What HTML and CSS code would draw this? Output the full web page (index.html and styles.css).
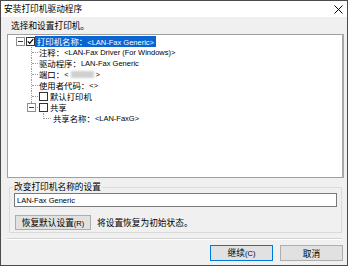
FILE: index.html
```html
<!DOCTYPE html>
<html lang="zh-CN">
<head>
  <meta charset="UTF-8" />
  <title>安装打印机驱动程序</title>
  <link rel="stylesheet" href="styles.css">
</head>
<body>
  <div class="window">
    <div class="titlebar">
      <span class="title">安装打印机驱动程序</span>
      <svg class="close" width="9" height="9" viewBox="0 0 9 9">
        <path d="M0.5 0.5L8.5 8.5M8.5 0.5L0.5 8.5" stroke="#000" stroke-width="1" fill="none"/>
      </svg>
    </div>

    <div class="content">
      <div class="prompt">选择和设置打印机。</div>

      <div class="tree">
        <div class="node root">
          <span class="expander"></span>
          <span class="check">
            <svg width="7" height="7" viewBox="0 0 7 7"><path d="M0.8 3.4L2.7 5.3L6.2 1.2" stroke="#000" stroke-width="1.2" fill="none"/></svg>
          </span>
          <span class="label selected">打印机名称：<span class="en">&lt;LAN-Fax Generic&gt;</span></span>
        </div>
        <div class="node child">注释：<span class="en">&lt;LAN-Fax Driver (For Windows)&gt;</span></div>
        <div class="node child">驱动程序：<span class="en">LAN-Fax Generic</span></div>
        <div class="node child">端口：<span class="en">&lt;</span><span class="blur"></span><span class="en">&gt;</span></div>
        <div class="node child">使用者代码：<span class="en">&lt;&gt;</span></div>
        <div class="node child">
          <span class="check"></span>
          <span class="label">默认打印机</span>
        </div>
        <div class="node child last share">
          <span class="expander"></span>
          <span class="check"></span>
          <span class="label">共享</span>
        </div>
        <div class="node grandchild">共享名称：<span class="en">&lt;LAN-FaxG&gt;</span></div>
      </div>

      <fieldset class="group">
        <legend>改变打印机名称的设置</legend>
        <input class="name-input" type="text" value="LAN-Fax Generic">
        <div class="reset-row">
          <button class="btn reset">恢复默认设置<span class="en">(R)</span></button>
          <span>将设置恢复为初始状态。</span>
        </div>
      </fieldset>

      <div class="separator"></div>

      <div class="actions">
        <button class="btn default">继续<span class="en">(C)</span></button>
        <button class="btn">取消</button>
      </div>
    </div>
  </div>
</body>
</html>
```

FILE: styles.css
```css
* {
  box-sizing: border-box;
}

body {
  margin: 0;
  background-color: #ffffff;
  color: #000000;
  font-family: "Noto Sans CJK SC", sans-serif;
  font-size: 8.7px;
}

.en {
  font-family: "Liberation Sans", Arial, sans-serif;
  font-size: 7.5px;
}

.window {
  width: 348px;
  height: 266px;
  border: 1px solid #4b4b4b;
  background-color: #f0f0f0;
  display: flex;
  flex-direction: column;
}

.titlebar {
  height: 16px;
  background-color: #ffffff;
  display: flex;
  align-items: center;
  justify-content: space-between;
  padding: 0 4px 0 3px;
  flex-shrink: 0;
}

.title {
  line-height: 16px;
}

.content {
  flex: 1;
  padding: 3px 3px 0 6px;
  display: flex;
  flex-direction: column;
}

.prompt {
  margin-left: 4px;
  height: 11px;
  line-height: 11px;
}

/* tree view */
.tree {
  margin-top: 3px;
  height: 144px;
  flex-shrink: 0;
  background-color: #ffffff;
  border: 1px solid #a0a0a0;
  border-right: 2px solid #a8a8a8;
  padding-top: 1px;
  position: relative;
  font-size: 8.4px;
}

.node {
  position: relative;
  height: 11px;
  line-height: 11px;
  display: flex;
  align-items: center;
  white-space: nowrap;
}

.root {
  padding-left: 8px;
}

.child {
  padding-left: 31px;
}

.child::before {
  content: "";
  position: absolute;
  left: 23px;
  top: 0;
  height: 11px;
  border-left: 1px dotted #9a9a9a;
}

.child::after {
  content: "";
  position: absolute;
  left: 24px;
  top: 5px;
  width: 6px;
  border-top: 1px dotted #9a9a9a;
}

.child.last::before {
  height: 6px;
}

.share {
  padding-left: 19px;
}

.grandchild {
  padding-left: 45px;
}

.grandchild::before {
  content: "";
  position: absolute;
  left: 35px;
  top: 0;
  height: 6px;
  border-left: 1px dotted #9a9a9a;
}

.grandchild::after {
  content: "";
  position: absolute;
  left: 36px;
  top: 5px;
  width: 7px;
  border-top: 1px dotted #9a9a9a;
}

.expander {
  position: relative;
  z-index: 1;
  width: 9px;
  height: 9px;
  border: 1px solid #8e8e8e;
  background-color: #ffffff;
  margin-right: 1px;
  flex-shrink: 0;
}

.share .expander {
  margin-right: 3px;
}

.expander::after {
  content: "";
  position: absolute;
  left: 1px;
  top: 3px;
  width: 5px;
  height: 1px;
  background-color: #3c3c3c;
}

.check {
  width: 9px;
  height: 9px;
  border: 1px solid #333333;
  background-color: #ffffff;
  display: flex;
  flex-shrink: 0;
}

.child .check,
.share .check {
  margin-right: 2px;
}

.label {
  padding: 0 2px 0 0;
}

.selected {
  background-color: #0a64d2;
  color: #ffffff;
  padding: 0 2px;
  height: 11px;
}

.blur {
  display: inline-block;
  width: 23px;
  height: 7px;
  margin: 0 2px;
  background-color: #cfcfcf;
  filter: blur(1.2px);
}

/* name settings */
.group {
  margin: 4px 2px 0 2px;
  padding: 0 4px 2px 4px;
  border: 1px solid #dadada;
  min-width: 0;
}

.group legend {
  padding: 0 1px;
  margin-left: -1px;
  line-height: 10px;
}

.name-input {
  display: block;
  width: 100%;
  height: 14px;
  margin: 1px 0 0 0;
  padding: 0 2px;
  border: 1px solid #7a7a7a;
  background-color: #ffffff;
  font-family: "Liberation Sans", Arial, sans-serif;
  font-size: 7.5px;
  color: #000000;
  outline: none;
}

.reset-row {
  margin-top: 8px;
  display: flex;
  align-items: center;
  gap: 6px;
  line-height: 11px;
}

.btn {
  background-color: #e1e1e1;
  border: 1px solid #adadad;
  color: #000000;
  font-family: "Noto Sans CJK SC", sans-serif;
  font-size: 8.7px;
  padding: 0;
  margin: 0;
  line-height: 11px;
  width: 63px;
  height: 16px;
}

.btn.reset {
  width: 76px;
  height: 15px;
  margin-left: 1px;
}

.btn.default {
  border-color: #0078d7;
}

.separator {
  margin: 5px 2px 0 0;
  height: 2px;
  border-top: 1px solid #d2d2d2;
  border-bottom: 1px solid #ffffff;
}

.actions {
  margin: 5px 1px 0 0;
  display: flex;
  justify-content: flex-end;
  gap: 7px;
}
```
